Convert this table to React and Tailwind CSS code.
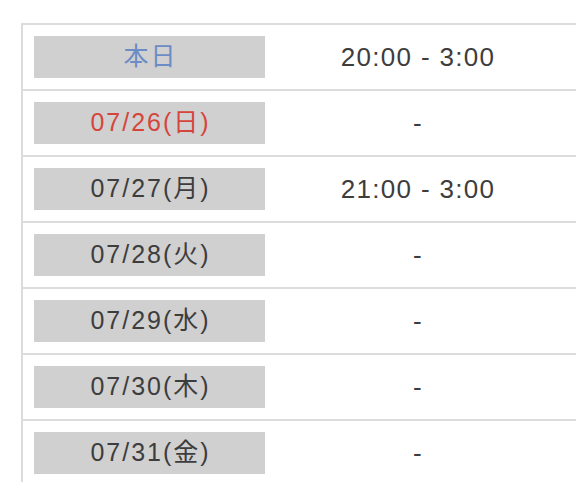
import React from "react";

const rows = [
  { d: "本日", t: "20:00 - 3:00", c: "text-[#6b8cc4]" },
  { d: "07/26(日)", t: "-", c: "text-[#d5453c]" },
  { d: "07/27(月)", t: "21:00 - 3:00", c: "text-[#3d3d3d]" },
  { d: "07/28(火)", t: "-", c: "text-[#3d3d3d]" },
  { d: "07/29(水)", t: "-", c: "text-[#3d3d3d]" },
  { d: "07/30(木)", t: "-", c: "text-[#3d3d3d]" },
  { d: "07/31(金)", t: "-", c: "text-[#3d3d3d]" },
];

export default function App() {
  return (
    <div
      className="w-[576px] h-[482px] overflow-hidden bg-white pt-[23px] pl-[21px]"
      style={{ fontFamily: '"Liberation Sans", "Noto Sans CJK JP", sans-serif' }}
    >
      <div className="w-[600px] border-l-2 border-t-2 border-[#dcdcdc]">
        {rows.map((r, i) => (
          <div key={i} className="flex h-[66px] border-b-2 border-[#dcdcdc]">
            <div className="w-[255px] pl-[11px] pt-[11px]">
              <div
                className={`w-[231px] h-[42px] bg-[#d0d0d0] flex items-center justify-center text-[25px] tracking-[2px] pl-[2px] ${r.c}`}
              >
                {r.d}
              </div>
            </div>
            <div className="w-[280px] pt-[11px] h-[53px] flex items-center justify-center text-[26px] tracking-[1.3px] text-[#3d3d3d]">
              {r.t}
            </div>
          </div>
        ))}
      </div>
    </div>
  );
}
